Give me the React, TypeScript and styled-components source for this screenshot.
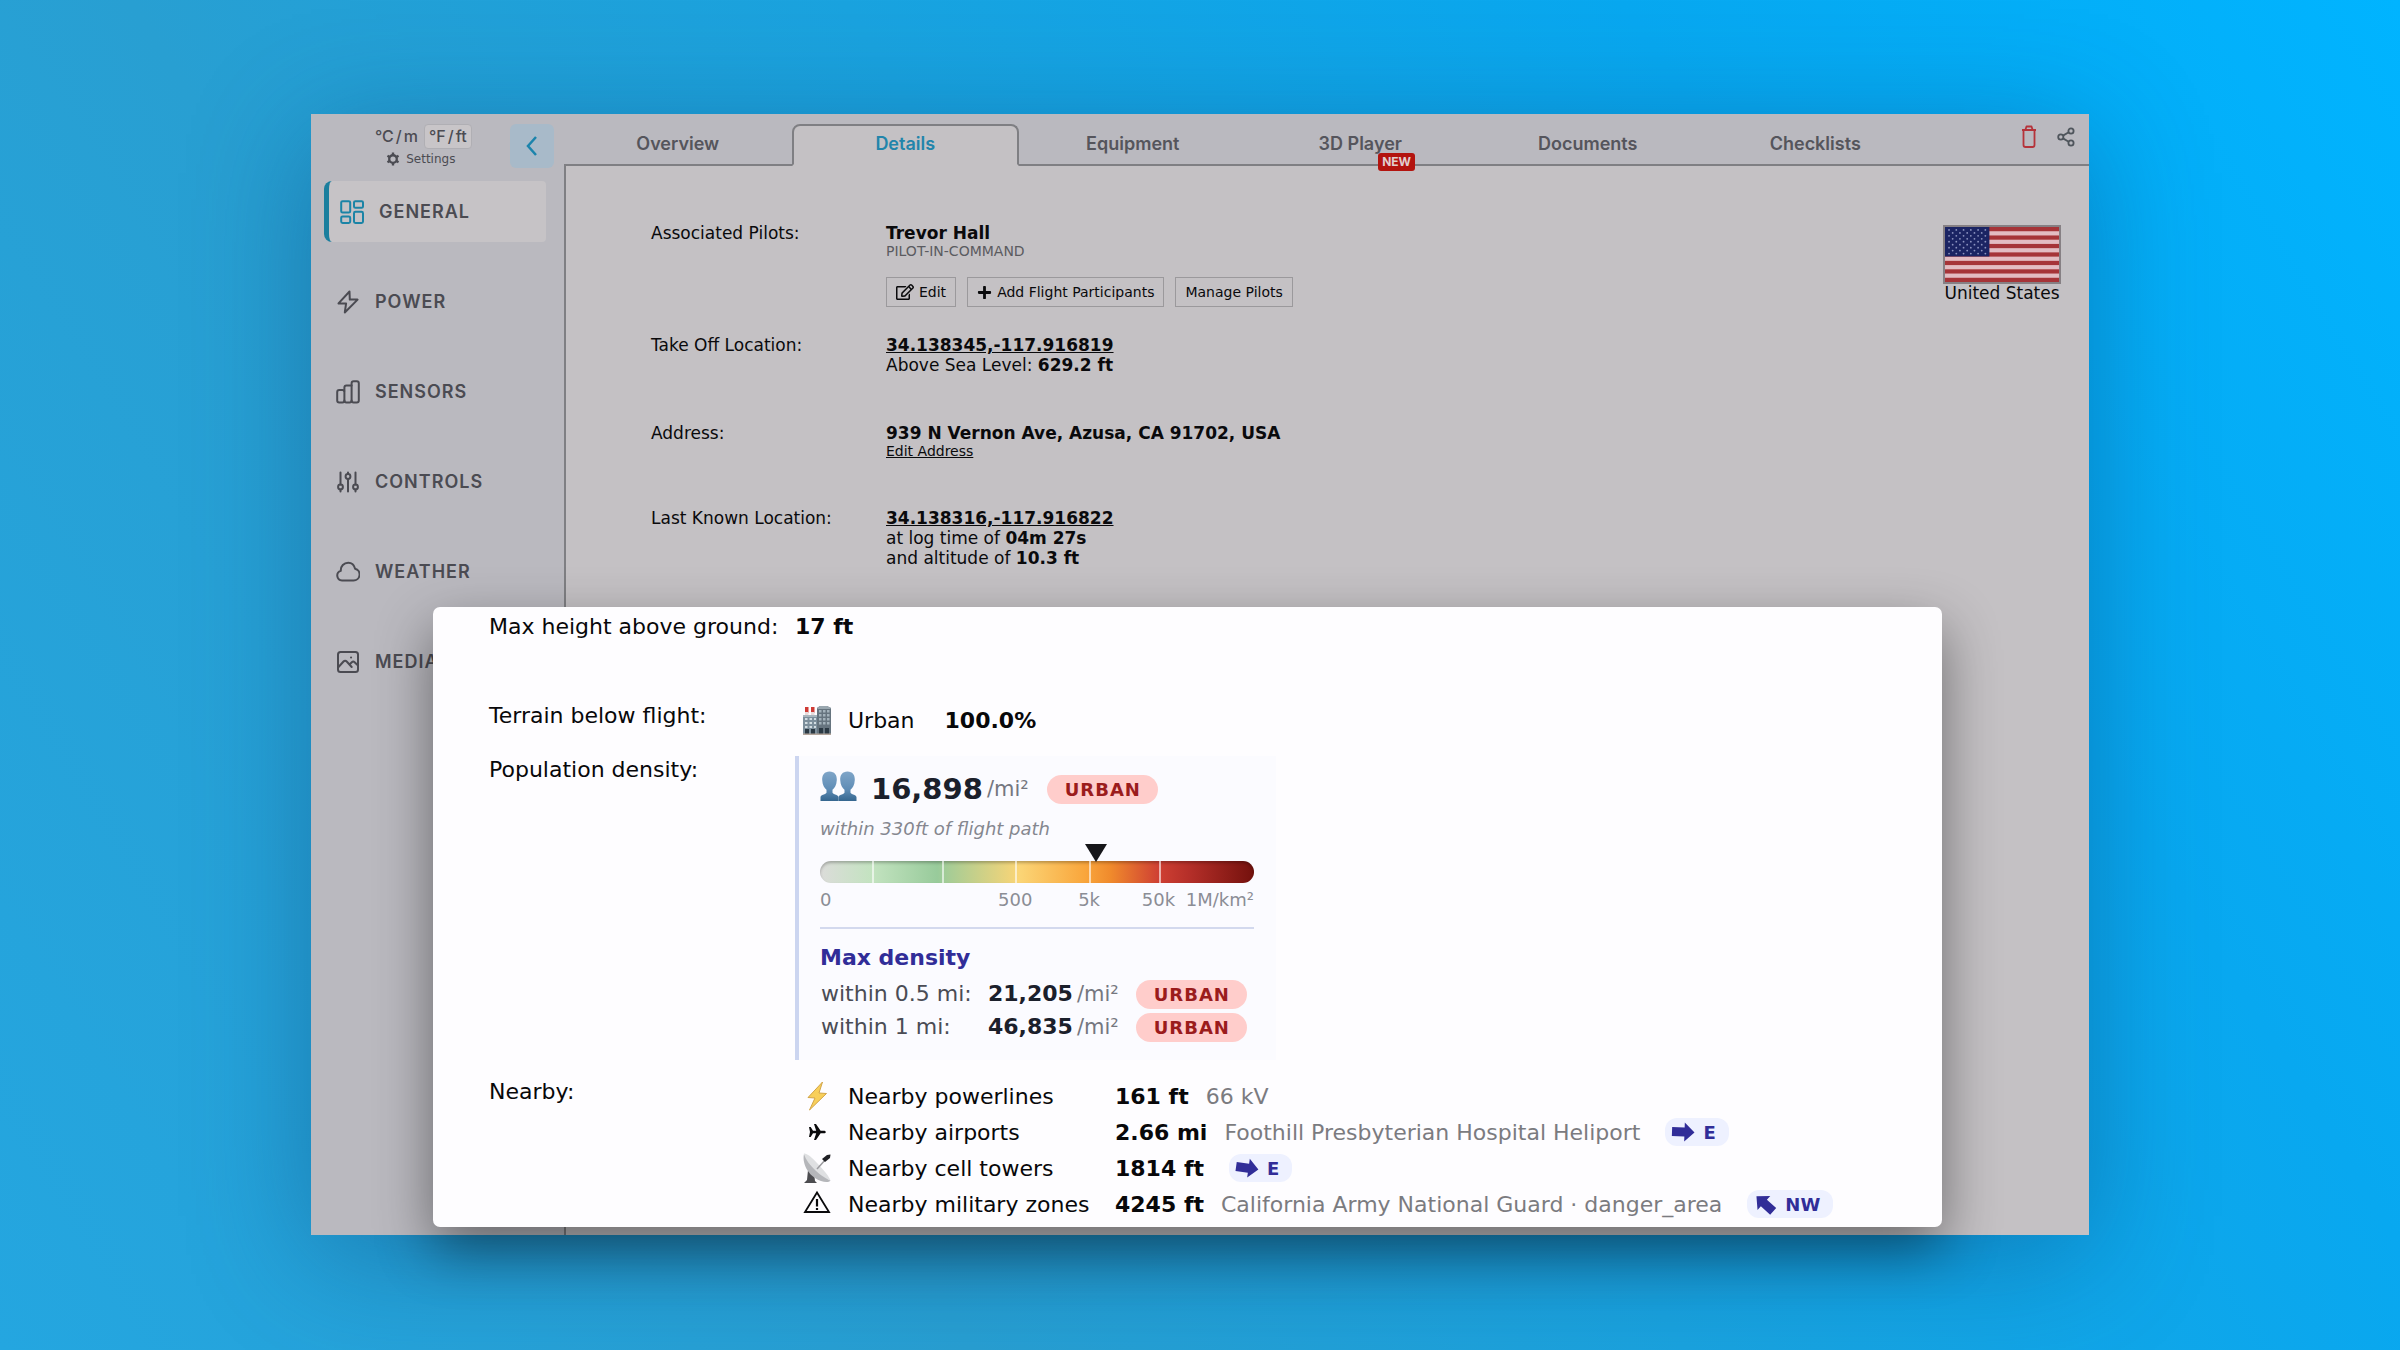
import React from "react";
import styled, { createGlobalStyle, css } from "styled-components";
import { FaRegEdit, FaPlus } from "react-icons/fa";

const GlobalStyle = createGlobalStyle`
  *, *::before, *::after { box-sizing: border-box; }
  html, body { margin: 0; padding: 0; }
  button { font: inherit; color: inherit; cursor: pointer; }
  h2, p, dl, dd, dt, ul { margin: 0; padding: 0; }
  svg { display: block; flex: none; }
`;

const ui = `Inter, "Liberation Sans", Arial, sans-serif`;
const body = `Verdana, "DejaVu Sans", sans-serif`;
const line = "#7f7f83";
const indigo = "#312d98";

/* ---------- page ---------- */

const Stage = styled.div`
  min-height: 100vh;
  display: flex;
  padding: 114px 311px 115px;
  background: linear-gradient(58deg, #24a6e0 0%, #289fd2 30%, #1aa3df 52%, #08a8f0 76%, #00b4ff 100%);
  font-family: ${body};
`;

const Panel = styled.div`
  position: relative;
  flex: 1;
  display: flex;
  background: #bab9bf;
  box-shadow: 0 20px 110px rgba(10, 70, 120, 0.42);
`;

/* ---------- side bar ---------- */

const Sidebar = styled.aside`
  width: 253px;
  flex: none;
  color: #4b4b52;
  font-family: ${ui};
`;

const SideHead = styled.div`
  display: flex;
  justify-content: space-between;
  padding: 10px 10px 13px 59px;
`;

const UnitBox = styled.div`
  display: flex;
  flex-direction: column;
  align-items: center;
  gap: 2px;
`;

const Units = styled.div`
  display: flex;
  gap: 1px;
`;

const Unit = styled.button<{ $on?: boolean }>`
  display: flex;
  gap: 2px;
  height: 25px;
  padding: 0 4px;
  border: 1px solid ${(p) => (p.$on ? "#b0afb4" : "transparent")};
  border-radius: 4px;
  background: ${(p) => (p.$on ? "#c8c5c8" : "none")};
  font-size: 16px;
  font-weight: 500;
  line-height: 23px;
`;

const SettingsLink = styled.a`
  display: flex;
  align-items: center;
  gap: 6px;
  color: inherit;
  font: 12px/16px ${body};
  text-decoration: none;
`;

const Collapse = styled.button`
  display: grid;
  place-items: center;
  width: 44px;
  height: 44px;
  padding: 0;
  border: 0;
  border-radius: 6px;
  background: #a8bac9;
  color: #1b84ac;
`;

const NavList = styled.nav`
  display: flex;
  flex-direction: column;
  gap: 29px;
  padding: 0 18px 0 13px;
`;

const NavItem = styled.a<{ $on?: boolean }>`
  display: flex;
  align-items: center;
  gap: 15px;
  height: 61px;
  padding-left: 12px;
  color: inherit;
  font-size: 18px;
  font-weight: 600;
  letter-spacing: 1px;
  text-decoration: none;
  svg { width: 24px; height: 24px; }
  ${(p) =>
    p.$on &&
    css`
      padding-left: 11px;
      border-left: 5px solid #1b7f9e;
      border-radius: 8px 4px 4px 8px;
      background: #c6c3c6;
      svg { color: #1b84a6; }
    `}
`;

/* ---------- main column ---------- */

const Main = styled.main`
  flex: 1;
  min-width: 0;
  display: flex;
  flex-direction: column;
`;

const TabBar = styled.div`
  display: flex;
  align-items: flex-end;
  height: 52px;
  border-bottom: 2px solid ${line};
  font-family: ${ui};
`;

const Tab = styled.button<{ $on?: boolean }>`
  position: relative;
  flex: 1;
  height: 42px;
  margin-bottom: -2px;
  padding: 0 0 4px;
  border: 2px solid transparent;
  background: none;
  color: #55555c;
  font-size: 18px;
  font-weight: 600;
  ${(p) =>
    p.$on &&
    css`
      border-color: ${line};
      border-bottom-color: #c4c1c4;
      border-radius: 8px 8px 0 0;
      background: #c4c1c4;
      color: #2285ab;
    `}
`;

const NewTag = styled.span`
  position: absolute;
  top: 27px;
  left: 58%;
  padding: 0 4px;
  border-radius: 3px;
  background: #b3140f;
  color: #e2cfcf;
  font-size: 12px;
  font-weight: 700;
  line-height: 18px;
`;

const Tools = styled.div`
  display: flex;
  justify-content: flex-end;
  align-items: center;
  gap: 20px;
  width: 160px;
  height: 52px;
  padding: 0 14px 2px 0;
`;

const ToolButton = styled.button<{ $danger?: boolean }>`
  padding: 0;
  border: 0;
  background: none;
  color: ${(p) => (p.$danger ? "#b5333a" : "#4f555c")};
`;

const Content = styled.div`
  flex: 1;
  display: flex;
  justify-content: space-between;
  align-items: flex-start;
  padding: 57px 28px 0 85px;
  border-left: 2px solid ${line};
  background: #c4c1c4;
  color: #0a0a0c;
  font-size: 17px;
  line-height: 20px;
`;

const Facts = styled.dl`
  flex: 1;
  display: flex;
  flex-direction: column;
  gap: 48px;
`;

const Fact = styled.div`
  display: grid;
  grid-template-columns: 235px 1fr;
`;

const FactGroup = styled.div`
  display: flex;
  flex-direction: column;
  gap: 28px;
`;

const Role = styled.p`
  color: #5b5b60;
  font-size: 14px;
  line-height: 16px;
`;

const Link = styled.a<{ $small?: boolean }>`
  color: inherit;
  text-decoration: underline;
  ${(p) => p.$small && css`font-size: 14px; line-height: 17px; display: block;`}
`;

const Actions = styled.div`
  display: flex;
  gap: 11px;
  margin-top: 18px;
`;

const Action = styled.button`
  display: flex;
  align-items: center;
  gap: 5px;
  height: 30px;
  padding: 0 9px;
  border: 1px solid #9b999c;
  background: none;
  font-size: 14px;
`;

const Country = styled.figure`
  display: flex;
  flex-direction: column;
  align-items: center;
  margin: 2px 0 0;
  line-height: 18px;
  svg { border: 2px solid #868084; }
`;

/* ---------- highlighted sheet ---------- */

const Sheet = styled.section`
  position: absolute;
  left: 122px;
  right: 147px;
  bottom: 8px;
  display: flex;
  flex-direction: column;
  gap: 18px;
  padding: 6px 56px 5px;
  border-radius: 7px;
  background: #fefdff;
  box-shadow: 0 22px 56px rgba(0, 0, 0, 0.45);
  color: #08080a;
  font-size: 22px;
`;

const SheetRow = styled.div<{ $first?: boolean }>`
  display: grid;
  grid-template-columns: 306px 1fr;
  ${(p) => p.$first && css`margin-bottom: 43px;`}
`;

const SheetLabel = styled.div<{ $first?: boolean }>`
  padding-top: ${(p) => (p.$first ? 0 : 2)}px;
  line-height: ${(p) => (p.$first ? 28 : 24)}px;
`;

const HeightValue = styled.b`
  line-height: 28px;
`;

const Terrain = styled.div`
  display: flex;
  align-items: center;
  height: 36px;
  gap: 30px;
`;

const Card = styled.div`
  justify-self: start;
  width: 481px;
  height: 304px;
  padding: 12px 22px 0 21px;
  border-left: 4px solid #ccd5f0;
  background: #fbfbff;
  color: #1b202b;
`;

const Headline = styled.div`
  display: flex;
  align-items: center;
  height: 42px;
`;

const PeopleSlot = styled.span`
  margin-right: 14px;
  padding-bottom: 6px;
`;

const Big = styled.b`
  font-size: 29px;
`;

const Per = styled.span`
  margin-left: 4px;
  color: #75777f;
  font-size: 21px;
`;

const Pill = styled.span`
  display: inline-block;
  height: 29px;
  padding: 0 17px 0 18px;
  border-radius: 15px;
  background: #ffcdcb;
  color: #9b1c1c;
  font-size: 18px;
  font-weight: 700;
  line-height: 29px;
  letter-spacing: 1px;
`;

const PillGap = styled.span`
  width: 18px;
`;

const Note = styled.p`
  height: 38px;
  color: #85878f;
  font-size: 18px;
  font-style: italic;
  line-height: 38px;
`;

const Scale = styled.div`
  position: relative;
  margin-top: 13px;
`;

const Bar = styled.div`
  height: 22px;
  border-radius: 11px;
  background: linear-gradient(90deg, #dcdcda 0%, #c3e3c0 12%, #98cb9b 27%, #fbd576 46%, #f9a63c 61%, #f08a2c 67%, #cf4033 78%, #b52f29 85%, #74110d 100%);
  box-shadow: inset 0 2px 3px rgba(0, 0, 0, 0.25);
`;

const Tick = styled.i`
  position: absolute;
  top: 0;
  width: 2px;
  height: 22px;
  background: rgba(255, 255, 255, 0.6);
`;

const Marker = styled.i`
  position: absolute;
  top: -17px;
  margin-left: -11px;
  border: 11px solid transparent;
  border-top: 18px solid #16161a;
  border-bottom: 0;
`;

const ScaleLabels = styled.div`
  position: relative;
  height: 46px;
  border-bottom: 2px solid #d3d9ee;
  color: #8b8d95;
  font-size: 18px;
  line-height: 34px;
`;

const ScaleLabel = styled.span<{ $align?: "start" | "end" }>`
  position: absolute;
  top: 0;
  transform: translateX(${(p) => (p.$align === "start" ? "0" : p.$align === "end" ? "-100%" : "-50%")});
`;

const CardTitle = styled.h2`
  margin-top: 13px;
  color: ${indigo};
  font-size: 22px;
  line-height: 32px;
`;

const DensityTable = styled.table`
  margin-top: 3px;
  border-collapse: collapse;
  th, td { height: 33px; padding: 0; text-align: left; line-height: 29px; white-space: nowrap; }
  th { width: 168px; padding-left: 1px; color: #4a4c55; font-weight: 400; }
  td:last-child { padding-left: 17px; }
`;

const NearbyTable = styled.table`
  justify-self: start;
  border-collapse: collapse;
  td, th { height: 36px; padding: 0; text-align: left; white-space: nowrap; }
  th { width: 267px; font-weight: 400; }
`;

const IconSlot = styled.span`
  display: grid;
  place-items: center;
  width: 44px;
  height: 34px;
  margin-right: 9px;
`;

const Inline = styled.div`
  display: flex;
  align-items: center;
`;

const Detail = styled.span`
  margin-left: 17px;
  color: #7b7b80;
`;

const Heading = styled.span`
  display: inline-flex;
  align-items: center;
  gap: 8px;
  height: 28px;
  margin-left: 25px;
  padding: 0 13px 0 6px;
  border-radius: 12px;
  background: #eef1ff;
  color: ${indigo};
  font-size: 18px;
  font-weight: 700;
`;

/* ---------- drawings ---------- */

const Outline = ({ children, w = 2 }: { children: React.ReactNode; w?: number }) => (
  <svg width="24" height="24" viewBox="0 0 24 24" fill="none" stroke="currentColor" strokeWidth={w} strokeLinecap="round" strokeLinejoin="round" aria-hidden>
    {children}
  </svg>
);

const GridIcon = () => (
  <Outline>
    <rect x="1.2" y="1.2" width="9" height="11.4" rx="1.4" />
    <rect x="14" y="1.2" width="9" height="6.6" rx="1.4" />
    <rect x="1.2" y="16.4" width="9" height="6.6" rx="1.4" />
    <rect x="14" y="11.8" width="9" height="11.2" rx="1.4" />
  </Outline>
);
const BoltIcon = () => <Outline><path d="M13.5 1.5 2.5 13.4h7.6L8.8 22.5 21.6 9.6h-7.8z" /></Outline>;
const BarsIcon = () => (
  <Outline>
    <rect x="1.200" y="10" width="7.200" height="12.600" rx="2" />
    <path d="M8.400 11V7.500a2 2 0 0 1 2-2h5.200M8.400 20.600a2 2 0 0 0 2 2h3.200a2 2 0 0 0 2-2" />
    <rect x="15.600" y="1.200" width="7.200" height="21.400" rx="2" />
  </Outline>
);
const SlidersIcon = () => (
  <Outline>
    <path d="M4.500 2.500v12M4.500 19.500v2M12 9v12.500M12 2.500v1.500M19.500 2.500v12M19.500 19.500v2" />
    <circle cx="4.500" cy="17" r="2.400" /><circle cx="12" cy="6.500" r="2.400" /><circle cx="19.500" cy="17" r="2.400" />
  </Outline>
);
const CloudIcon = () => <Outline><path d="M6 20.500a4.900 4.900 0 0 1-1.200-9.600C4.500 6 8 2.800 12.200 2.800c3.600 0 6 2.200 6.900 5.900A6 6 0 0 1 17.500 20.500z" /></Outline>;
const ImageIcon = () => (
  <Outline>
    <rect x="2" y="2" width="20" height="20" rx="2.500" />
    <path d="M2.500 17l5-5.500a2.200 2.200 0 0 1 3.200 0l5 5.500M14 14l1.800-1.800a2 2 0 0 1 2.800 0L21.500 15M15 7.500h.1" />
  </Outline>
);

const GearIcon = () => (
  <svg width="14" height="14" viewBox="0 0 24 24" fill="none" stroke="currentColor" aria-hidden>
    <circle cx="12" cy="12" r="6.500" strokeWidth="4" />
    <path d="M12 1v5M12 18v5M2.500 6.500l4.300 2.500M17.200 15l4.300 2.500M2.500 17.500 6.800 15M17.200 9l4.300-2.500" strokeWidth="4" />
  </svg>
);

const TrashIcon = () => (
  <svg width="16" height="24" viewBox="0 0 16 24" fill="none" stroke="currentColor" strokeWidth="1.800" strokeLinejoin="round" aria-hidden>
    <path d="M1 5h14M2.500 5v15a2 2 0 0 0 2 2h7a2 2 0 0 0 2-2V5M4.500 4.500 5.500 1.500h5l1 3" />
  </svg>
);
const ShareIcon = () => (
  <svg width="18" height="20" viewBox="0 0 18 20" fill="none" stroke="currentColor" strokeWidth="1.800" aria-hidden>
    <circle cx="14" cy="4" r="2.600" /><circle cx="3.800" cy="10" r="2.600" /><circle cx="14" cy="16" r="2.600" />
    <path d="m6 8.600 5.700-3.300M6 11.400l5.700 3.300" />
  </svg>
);

const Flag = () => (
  <svg width="118" height="59" viewBox="0 0 113 56" preserveAspectRatio="none" role="img" aria-label="Flag of the United States">
    <rect width="113" height="56" fill="#e3bcc2" />
    {[0, 1, 2, 3, 4, 5, 6].map((i) => (
      <rect key={i} y={(i * 2 * 56) / 13} width="113" height={56 / 13} fill="#a63438" />
    ))}
    <rect width="44" height="30" fill="#1b2463" />
    {Array.from({ length: 9 }, (_, r) =>
      Array.from({ length: r % 2 ? 5 : 6 }, (_, c) => (
        <circle key={`${r}-${c}`} cx={4 + c * 7.2 + (r % 2 ? 3.6 : 0)} cy={3 + r * 3} r="0.9" fill="#8d94c0" />
      ))
    )}
  </svg>
);

const CityIcon = () => (
  <svg width="30" height="30" viewBox="0 0 30 30" aria-hidden>
    <rect x="1" y="10" width="15" height="19" fill="#7d8f9c" />
    <path d="M1 10h15v2H1z" fill="#a9b6be" />
    <path d="M3 2h3.500v6H3zM9 2h3.500v6H9z" fill="#cf3a35" />
    <path d="M3 7h3.500v3H3zM9 7h3.500v3H9z" fill="#e9dcdc" />
    <path d="M15 3l3-2h7l4 2v26H15z" fill="#66747f" />
    <path d="M15 3l3-2h7l4 2-1 1H16z" fill="#9aa7b0" />
    {[5, 9, 13, 17].map((y) => <path key={y} d={`M17 ${y}h2.500v2.500H17zM21 ${y}h2.500v2.500H21zM25 ${y}h2.500v2.500H25z`} fill="#a3b2bb" />)}
    {[13, 17, 21].map((y) => <path key={y} d={`M3 ${y}h2.500v2H3zM7.500 ${y}H10v2H7.500zM12 ${y}h2v2h-2z`} fill="#d3dde2" />)}
    <path d="M3 24h4v5H3zM9 24h4v5H9zM17 23h4v6h-4zM23 23h4v6h-4z" fill="#2b3944" />
    <path d="M1 28.500h28V30H1z" fill="#b3a59b" />
  </svg>
);

const PeopleIcon = () => (
  <svg width="37" height="30" viewBox="0 0 37 30" aria-hidden>
    <defs>
      <linearGradient id="bust" x1="0" y1="0" x2="0" y2="1">
        <stop offset="0" stopColor="#7fa5c8" />
        <stop offset="0.6" stopColor="#5f8db6" />
        <stop offset="1" stopColor="#35668f" />
      </linearGradient>
    </defs>
    {[0, 18].map((x) => (
      <path key={x} transform={`translate(${x} 0)`} fill="url(#bust)"
        d="M9.500 0.500c5 0 7.500 3.500 7.300 8.500-.2 5-2.300 8.300-4.300 9.800v3c1.500 2 6 2 6 4.500V30H.5v-3.700c0-2.500 4.500-2.500 6-4.500v-3C4.500 17.300 2.400 14 2.200 9 2 4 4.500.5 9.500.5z" />
    ))}
  </svg>
);

const LightningIcon = () => (
  <svg width="24" height="30" viewBox="0 0 24 30" aria-hidden>
    <path d="M17.500 1 3 16.500l7 .5L4.500 29 21.500 12.500l-7.500-.5z" fill="#f8cf5a" stroke="#d3a548" strokeWidth="1" strokeLinejoin="round" />
  </svg>
);
const PlaneIcon = () => (
  <svg width="18" height="18" viewBox="0 0 18 18" aria-hidden>
    <path d="M1 4h1.700l2.300 3.700h3.200L6 1h2l4.600 6.700H16c1 0 1.800.6 1.800 1.300S17 10.300 16 10.300h-3.400L8 17H6l2.200-6.700H5L2.700 14H1l1-5z" fill="#0a0a0c" />
  </svg>
);
const DishIcon = () => (
  <svg width="30" height="30" viewBox="0 0 30 30" aria-hidden>
    <path d="M6 17l6 3 1 8 2 2H2l3-3z" fill="#4c4c50" />
    <path d="M2 1C0 9 5 23 19 28c4 1.500 8 1.500 9.500-.5C21 23 7 9 2 1z" fill="#b5b6ba" />
    <path d="M2 1c-1-1 3-.5 8 4s17 17 18.500 22.500C21 25 5 12 2 1z" fill="#dfe0e2" />
    <path d="M15 16l9-10" stroke="#9a9a9e" strokeWidth="1.500" />
    <path d="M20 6l5-4 3.500-.5L28 5l-5 4z" fill="#202024" />
  </svg>
);
const WarningIcon = () => (
  <svg width="28" height="28" viewBox="0 0 28 28" fill="none" stroke="#0a0a0c" aria-hidden>
    <path d="M14 2.500 26 22H2z" strokeWidth="1.800" />
    <path d="M14 9v7.500M14 18v2" strokeWidth="2.200" />
  </svg>
);
const Arrow = ({ angle }: { angle: number }) => (
  <svg width="24" height="20" viewBox="-12 -10 24 20" overflow="visible" aria-hidden>
    <path transform={`rotate(${angle})`} d="M-11-4.500H1.500V-9.500L11.500 0 1.500 9.500V4.500H-11z" fill="currentColor" />
  </svg>
);

/* ---------- data ---------- */

const nav: [string, React.ComponentType][] = [
  ["GENERAL", GridIcon],
  ["POWER", BoltIcon],
  ["SENSORS", BarsIcon],
  ["CONTROLS", SlidersIcon],
  ["WEATHER", CloudIcon],
  ["MEDIA", ImageIcon],
];

const tabs = ["Overview", "Details", "Equipment", "3D Player", "Documents", "Checklists"];

const ticks = [12, 28, 45, 62, 78];
const marks: { at: number; text: string; align?: "start" | "end" }[] = [
  { at: 0, text: "0", align: "start" },
  { at: 45, text: "500" },
  { at: 62, text: "5k" },
  { at: 78, text: "50k" },
  { at: 100, text: "1M/km²", align: "end" },
];

const density = [
  { range: "within 0.5 mi:", value: "21,205" },
  { range: "within 1 mi:", value: "46,835" },
];

const nearby: { name: string; icon: React.ReactNode; value: string; detail?: string; dir?: string; angle?: number }[] = [
  { name: "Nearby powerlines", icon: <LightningIcon />, value: "161 ft", detail: "66 kV" },
  { name: "Nearby airports", icon: <PlaneIcon />, value: "2.66 mi", detail: "Foothill Presbyterian Hospital Heliport", dir: "E", angle: 2 },
  { name: "Nearby cell towers", icon: <DishIcon />, value: "1814 ft", dir: "E", angle: 8 },
  { name: "Nearby military zones", icon: <WarningIcon />, value: "4245 ft", detail: "California Army National Guard · danger_area", dir: "NW", angle: 222 },
];

/* ---------- view ---------- */

export default function App() {
  return (
    <Stage>
      <GlobalStyle />
      <Panel>
        <Sidebar>
          <SideHead>
            <UnitBox>
              <Units>
                <Unit><span>°C</span><span>/</span><span>m</span></Unit>
                <Unit $on><span>°F</span><span>/</span><span>ft</span></Unit>
              </Units>
              <SettingsLink href="#settings"><GearIcon />Settings</SettingsLink>
            </UnitBox>
            <Collapse aria-label="Collapse menu">
              <svg width="14" height="22" viewBox="0 0 14 22" fill="none" stroke="currentColor" strokeWidth="2.500"><path d="M11 2 3 11l8 9" /></svg>
            </Collapse>
          </SideHead>
          <NavList>
            {nav.map(([name, Icon], i) => (
              <NavItem key={name} href={`#${name.toLowerCase()}`} $on={i === 0}><Icon />{name}</NavItem>
            ))}
          </NavList>
        </Sidebar>
        <Main>
          <TabBar>
            {tabs.map((t) => (
              <Tab key={t} $on={t === "Details"}>
                {t}
                {t === "3D Player" && <NewTag>NEW</NewTag>}
              </Tab>
            ))}
            <Tools>
              <ToolButton $danger aria-label="Delete"><TrashIcon /></ToolButton>
              <ToolButton aria-label="Share"><ShareIcon /></ToolButton>
            </Tools>
          </TabBar>
          <Content>
            <Facts>
              <FactGroup>
                <Fact>
                  <dt>Associated Pilots:</dt>
                  <dd>
                    <b>Trevor Hall</b>
                    <Role>PILOT-IN-COMMAND</Role>
                    <Actions>
                      <Action><FaRegEdit size={18} />Edit</Action>
                      <Action><FaPlus size={15} />Add Flight Participants</Action>
                      <Action>Manage Pilots</Action>
                    </Actions>
                  </dd>
                </Fact>
                <Fact>
                  <dt>Take Off Location:</dt>
                  <dd>
                    <Link href="#takeoff"><b>34.138345,-117.916819</b></Link>
                    <p>Above Sea Level: <b>629.2 ft</b></p>
                  </dd>
                </Fact>
              </FactGroup>
              <Fact>
                <dt>Address:</dt>
                <dd>
                  <b>939 N Vernon Ave, Azusa, CA 91702, USA</b>
                  <Link $small href="#address">Edit Address</Link>
                </dd>
              </Fact>
              <Fact>
                <dt>Last Known Location:</dt>
                <dd>
                  <Link href="#last"><b>34.138316,-117.916822</b></Link>
                  <p>at log time of <b>04m 27s</b></p>
                  <p>and altitude of <b>10.3 ft</b></p>
                </dd>
              </Fact>
            </Facts>
            <Country>
              <Flag />
              <figcaption>United States</figcaption>
            </Country>
          </Content>
        </Main>
        <Sheet>
          <SheetRow $first>
            <SheetLabel $first>Max height above ground:</SheetLabel>
            <HeightValue>17 ft</HeightValue>
          </SheetRow>
          <SheetRow>
            <SheetLabel>Terrain below flight:</SheetLabel>
            <Terrain>
              <Inline><IconSlot><CityIcon /></IconSlot>Urban</Inline>
              <b>100.0%</b>
            </Terrain>
          </SheetRow>
          <SheetRow>
            <SheetLabel>Population density:</SheetLabel>
            <Card>
              <Headline>
                <PeopleSlot><PeopleIcon /></PeopleSlot><Big>16,898</Big><Per>/mi²</Per><PillGap /><Pill>URBAN</Pill>
              </Headline>
              <Note>within 330ft of flight path</Note>
              <Scale>
                <Bar />
                {ticks.map((t) => <Tick key={t} style={{ left: `${t}%` }} />)}
                <Marker style={{ left: "63.6%" }} />
              </Scale>
              <ScaleLabels>
                {marks.map((m) => (
                  <ScaleLabel key={m.text} $align={m.align} style={{ left: `${m.at}%` }}>{m.text}</ScaleLabel>
                ))}
              </ScaleLabels>
              <CardTitle>Max density</CardTitle>
              <DensityTable>
                <tbody>
                  {density.map((d) => (
                    <tr key={d.range}>
                      <th scope="row">{d.range}</th>
                      <td><b>{d.value}</b><Per>/mi²</Per></td>
                      <td><Pill>URBAN</Pill></td>
                    </tr>
                  ))}
                </tbody>
              </DensityTable>
            </Card>
          </SheetRow>
          <SheetRow>
            <SheetLabel>Nearby:</SheetLabel>
            <NearbyTable>
              <tbody>
                {nearby.map((n) => (
                  <tr key={n.name}>
                    <td><IconSlot>{n.icon}</IconSlot></td>
                    <th scope="row">{n.name}</th>
                    <td>
                      <Inline>
                        <b>{n.value}</b>
                        {n.detail && <Detail>{n.detail}</Detail>}
                        {n.dir && <Heading><Arrow angle={n.angle ?? 0} />{n.dir}</Heading>}
                      </Inline>
                    </td>
                  </tr>
                ))}
              </tbody>
            </NearbyTable>
          </SheetRow>
        </Sheet>
      </Panel>
    </Stage>
  );
}
